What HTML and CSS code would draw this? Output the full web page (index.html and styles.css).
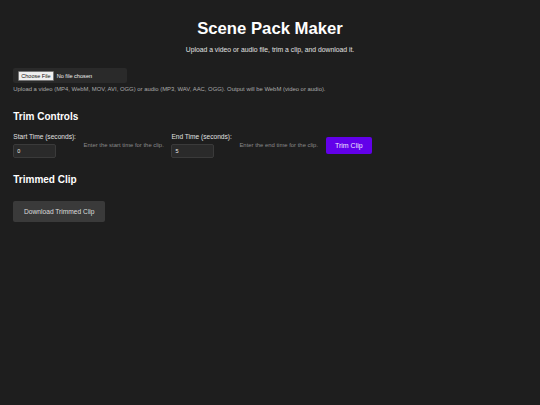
FILE: index.html
```html
<!DOCTYPE html>
<html lang="en">
<head>
<meta charset="utf-8">
<title>Scene Pack Maker</title>
<link rel="stylesheet" href="styles.css">
</head>
<body>
<main class="app">
  <h1 class="title">Scene Pack Maker</h1>
  <p class="subtitle">Upload a video or audio file, trim a clip, and download it.</p>

  <section class="upload">
    <div class="file-box"><input class="file-input" type="file" accept="video/*,audio/*"></div>
    <p class="help">Upload a video (MP4, WebM, MOV, AVI, OGG) or audio (MP3, WAV, AAC, OGG). Output will be WebM (video or audio).</p>
  </section>

  <h2 class="section-title">Trim Controls</h2>
  <div class="trim-row">
    <label class="field">
      <span class="field-label">Start Time (seconds):</span>
      <input class="time-input" type="number" value="0">
    </label>
    <span class="hint">Enter the start time for the clip.</span>
    <label class="field">
      <span class="field-label">End Time (seconds):</span>
      <input class="time-input" type="number" value="5">
    </label>
    <span class="hint">Enter the end time for the clip.</span>
    <button class="btn-primary" type="button">Trim Clip</button>
  </div>

  <h2 class="section-title second">Trimmed Clip</h2>
  <button class="btn-secondary" type="button">Download Trimmed Clip</button>
</main>
</body>
</html>
```

FILE: styles.css
```css
html, body {
  margin: 0;
  background: #1e1e1e;
}
body {
  font-family: "Liberation Sans", Arial, sans-serif;
  color: #fff;
}
.app {
  padding: 18.5px 13.3px 15px;
}
.title {
  margin: 0;
  font-size: 16.7px;
  line-height: 20px;
  font-weight: 700;
  text-align: center;
  color: #fff;
}
.subtitle {
  margin: 7px 0 0;
  font-size: 6.8px;
  line-height: 8px;
  text-align: center;
  color: #e0e0e0;
}
.upload {
  margin-top: 14.5px;
}
.file-box {
  width: 114px;
  height: 15px;
  box-sizing: border-box;
  padding: 0 5px;
  background: #2a2a2a;
  border-radius: 2px;
  display: flex;
  align-items: center;
}
.file-input {
  font-family: "Liberation Sans", Arial, sans-serif;
  font-size: 5.6px;
  color: #f0f0f0;
  margin: 0;
}
.file-input::file-selector-button {
  font-family: "Liberation Sans", Arial, sans-serif;
  font-size: 5.5px;
  margin: 0 3px 0 0;
  padding: 1px 2px;
  background: #efefef;
  color: #111;
  border: 1px solid #767676;
  border-radius: 1px;
}
.help {
  margin: 2px 0 0;
  font-size: 5.9px;
  line-height: 8px;
  color: #aaa;
}
.section-title {
  margin: 18px 0 0;
  font-size: 10px;
  line-height: 12px;
  font-weight: 700;
  color: #fff;
}
.section-title.second {
  margin-top: 16px;
}
.trim-row {
  margin-top: 9.7px;
  display: flex;
  align-items: center;
  gap: 7.6px;
}
.field {
  display: flex;
  flex-direction: column;
  gap: 3.3px;
}
.field-label {
  font-size: 6.6px;
  line-height: 8px;
  color: #e0e0e0;
}
.time-input {
  width: 42.3px;
  height: 14.3px;
  box-sizing: border-box;
  margin: 0;
  padding: 0 3px;
  background: #2a2a2a;
  border: 1px solid #3a3a3a;
  border-radius: 2px;
  color: #eee;
  font-family: "Liberation Sans", Arial, sans-serif;
  font-size: 5.5px;
  -moz-appearance: textfield;
  appearance: textfield;
}
.time-input::-webkit-outer-spin-button,
.time-input::-webkit-inner-spin-button {
  -webkit-appearance: none;
  margin: 0;
}
.hint {
  font-size: 5.9px;
  line-height: 8px;
  color: #8a8a8a;
}
.btn-primary {
  height: 17.7px;
  padding: 0 9.3px;
  margin: 0;
  background: #6200ea;
  color: #f0e4ff;
  border: none;
  border-radius: 2px;
  font-family: "Liberation Sans", Arial, sans-serif;
  font-size: 7px;
}
.btn-secondary {
  display: block;
  margin-top: 14.8px;
  width: 92px;
  height: 21px;
  padding: 0;
  background: #3a3a3a;
  color: #ddd;
  border: none;
  border-radius: 2px;
  font-family: "Liberation Sans", Arial, sans-serif;
  font-size: 6.65px;
}
```
